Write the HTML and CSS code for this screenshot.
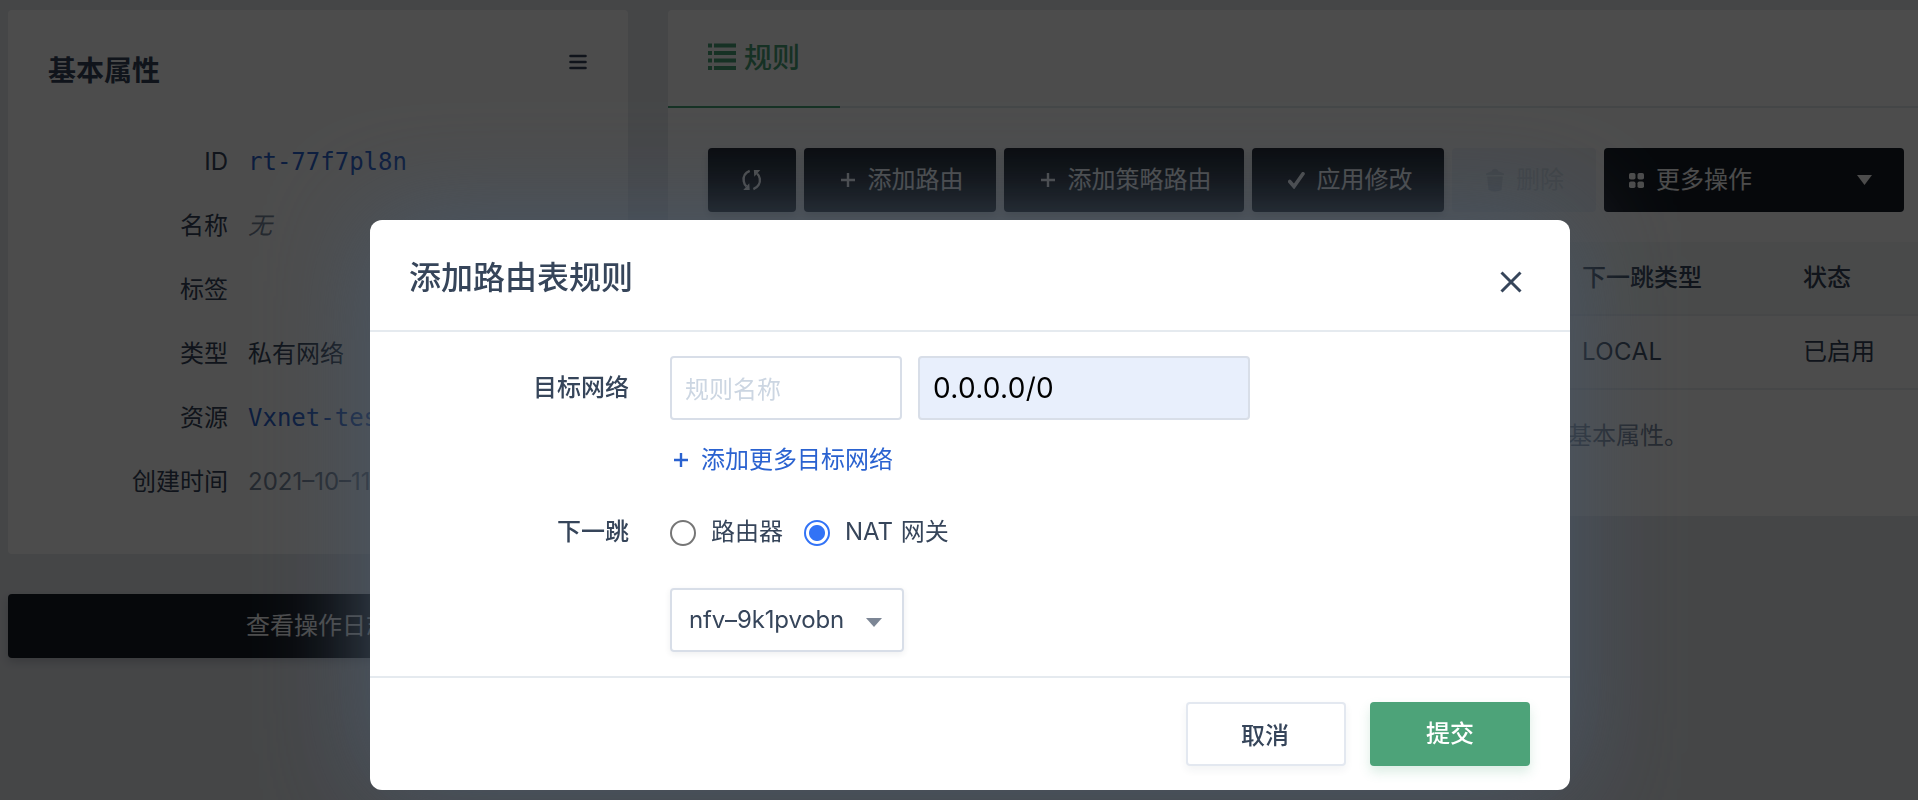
FILE: index.html
```html
<!DOCTYPE html>
<html lang="zh-CN">
<head>
<meta charset="utf-8">
<title>添加路由表规则</title>
<link rel="stylesheet" href="styles.css">
</head>
<body>
<div class="page">
  <aside class="sidebar">
    <section class="card attrs">
      <header class="attrs-head">
        <h2>基本属性</h2>
        <svg class="menu-icon" width="18" height="16" viewBox="0 0 18 16"><path d="M1.500 2h15M1.500 8h15M1.500 14h15"/></svg>
      </header>
      <dl class="attr-list">
        <dt>ID</dt><dd class="link">rt-77f7pl8n</dd>
        <dt>名称</dt><dd class="empty">无</dd>
        <dt>标签</dt><dd></dd>
        <dt>类型</dt><dd>私有网络</dd>
        <dt>资源</dt><dd class="link">Vxnet-test</dd>
        <dt>创建时间</dt><dd class="time">2021–10–11</dd>
      </dl>
    </section>
    <button class="btn log-btn">查看操作日志</button>
  </aside>

  <main class="card rules">
    <nav class="tabs">
      <a class="tab">
        <svg width="28" height="28" viewBox="0 0 28 28" fill="currentColor"><path d="M0 .5h4v4H0zM6 .5h22v4H6zM0 8h4v4H0zM6 8h22v4H6zM0 15.500h4v4H0zM6 15.500h22v4H6zM0 23h4v4H0zM6 23h22v4H6z"/></svg>
        <span>规则</span>
      </a>
    </nav>
    <div class="toolbar">
      <button class="btn w-refresh">
        <svg width="22" height="22" viewBox="0 0 22 24"><path d="M8.500 2C3.500 4 1.200 8.500 2 13.500c.4 2.500 1.500 4.300 3 5.500M12.500 22C17.500 20 20.300 15.500 19.500 10.500c-.4-2.500-1.500-4.300-3-5.500" fill="none" stroke="currentColor" stroke-width="2.600"/><path d="M13 1.200h7L13.500 8.500zM8.500 22.800h-7L8 15.500z" fill="currentColor"/></svg>
      </button>
      <button class="btn w-4"><svg class="plus" width="14" height="14" viewBox="0 0 14 14"><path d="M7 0v14M0 7h14"/></svg>添加路由</button>
      <button class="btn w-6"><svg class="plus" width="14" height="14" viewBox="0 0 14 14"><path d="M7 0v14M0 7h14"/></svg>添加策略路由</button>
      <button class="btn w-4"><svg class="check" width="17" height="17" viewBox="0 0 17 17"><path d="M1.700 9.500 6 14.500 15 1.800"/></svg>应用修改</button>
      <button class="btn disabled w-2"><svg class="trash" width="18" height="24" viewBox="0 0 18 24" fill="currentColor"><path d="M0 7V5.500L6 3c0-3 6-3 6 0l6 2.500V7zM1.200 8.500h15.600L15.500 22q-6.500 3-13 0z"/></svg>删除</button>
      <button class="btn w-more"><svg class="grid-icon" width="15" height="15" viewBox="0 0 15 15" fill="currentColor"><rect width="6.500" height="6.500" rx="1.800"/><rect x="8.500" width="6.500" height="6.500" rx="1.800"/><rect y="8.500" width="6.500" height="6.500" rx="1.800"/><rect x="8.500" y="8.500" width="6.500" height="6.500" rx="1.800"/></svg>更多操作<svg class="caret" width="15" height="10" viewBox="0 0 15 10" fill="currentColor"><path d="M0 0h15L7.500 10z"/></svg></button>
    </div>
    <div class="table">
      <div class="row head"><span>下一跳类型</span><span>状态</span></div>
      <div class="row"><span class="local">LOCAL</span><span>已启用</span></div>
    </div>
    <p class="note">基本属性。</p>
  </main>
</div>

<div class="overlay">
  <form class="modal">
    <header class="modal-head">
      <h1>添加路由表规则</h1>
      <svg class="close" width="22" height="22" viewBox="0 0 22 22"><path d="M1.500 1.500l19 19M20.500 1.500l-19 19"/></svg>
    </header>
    <div class="modal-body">
      <label class="label">目标网络</label>
      <div class="control">
        <div class="inputs">
          <div class="field name-field">规则名称</div>
          <div class="field cidr-field">0.0.0.0/0</div>
        </div>
        <a class="add-more"><svg class="plus" width="14" height="14" viewBox="0 0 14 14"><path d="M7 0v14M0 7h14"/></svg>添加更多目标网络</a>
      </div>
      <label class="label hop-label">下一跳</label>
      <div class="control hop">
        <div class="radios">
          <span class="radio"></span><span class="radio-text">路由器</span>
          <span class="radio on"></span><span class="radio-text nat">NAT 网关</span>
        </div>
        <div class="select"><span class="value">nfv–9k1pvobn</span><svg width="16" height="9" viewBox="0 0 16 9"><path d="M0 0h16L8 9z" fill="#7c8695"/></svg></div>
      </div>
    </div>
    <footer class="modal-foot">
      <button type="button" class="action cancel">取消</button>
      <button type="button" class="action submit">提交</button>
    </footer>
  </form>
</div>
</body>
</html>
```
FILE: styles.css
```css
* { box-sizing: border-box; }
html, body { margin: 0; height: 100%; overflow: hidden; }
body {
  background: #e7e9ee;
  color: #36455a;
  font: 24px/36px Inter, "Noto Sans CJK SC", sans-serif;
  font-weight: 370;
}
h1, h2, p, dl, dd { margin: 0; }
button { font: inherit; border: 0; padding: 0; }

.page { display: flex; gap: 40px; padding: 10px 0 0 8px; width: 1958px; }
.card { background: #fff; border-radius: 4px; }
.sidebar { width: 620px; display: flex; flex-direction: column; gap: 40px; }

.attrs { height: 544px; padding: 40px; }
.attrs-head { display: flex; justify-content: space-between; height: 81px; }
.attrs-head h2 { font-size: 28px; line-height: 42px; font-weight: 600; }
.menu-icon { margin: 4px 1px 0 0; stroke: #36455a; stroke-width: 2.6; stroke-linecap: round; }
.attr-list { display: grid; grid-template-columns: 180px 1fr; column-gap: 20px; grid-auto-rows: 64px; line-height: 64px; margin-top: -1px; }
.attr-list dt { text-align: right; }
.link { color: #2a62d0; font-family: "DejaVu Sans Mono", monospace; }
.empty { font-style: italic; color: #79879c; }
.time { color: #79879c; }

.btn {
  display: flex; align-items: center; justify-content: center;
  height: 64px; border-radius: 4px;
  background: #161c26; color: #fff;
  box-shadow: 0 4px 8px rgba(36, 46, 66, .2);
  white-space: nowrap;
}
.log-btn { width: 620px; }

.rules { width: 1290px; height: 506px; }
.tabs { height: 98px; border-bottom: 2px solid #e3e9ef; }
.tab {
  display: flex; align-items: flex-start; gap: 8px;
  width: 172px; height: 98px; padding: 30px 0 0 40px;
  border-bottom: 2px solid #4ca379; color: #4ca379;
  font-size: 28px; line-height: 37px; font-weight: 500;
}
.tab svg { margin-top: 3px; }
.toolbar { display: flex; gap: 8px; padding: 40px 0 0 40px; }
.w-refresh { width: 88px; }
.w-4 { width: 192px; padding-left: 4px; }
.w-6 { width: 240px; padding-left: 4px; }
.w-2 { width: 144px; }
.plus { fill: none; stroke: currentColor; stroke-width: 2.4; margin-right: 13px; }
.check { fill: none; stroke: currentColor; stroke-width: 3.6; stroke-linecap: round; margin-right: 12px; }
.trash { margin-right: 12px; }
.disabled { background: #eff4f9; color: #d3dce6; box-shadow: none; padding-left: 2px; }
.w-more { width: 300px; justify-content: flex-start; padding: 0 32px 0 25px; box-shadow: none; }
.grid-icon { margin-right: 12px; }
.caret { margin-left: auto; }

.table { margin: 30px 0 0 40px; width: 1250px; }
.row { display: grid; grid-template-columns: 221px 1fr; height: 74px; line-height: 72px; padding-left: 874px; border-bottom: 2px solid #e9edf2; }
.head { background: #f5f9f8; font-weight: 500; }
.local { letter-spacing: .4px; }
.note { padding: 28px 0 0 900px; color: #79879c; }

.overlay { position: fixed; inset: 0; background: rgba(0, 0, 0, .7); padding: 220px 0 0 370px; }
.modal { width: 1200px; height: 570px; background: #fff; border-radius: 12px; box-shadow: 0 0 106px #4a5868; display: flex; flex-direction: column; }
.modal-head { display: flex; justify-content: space-between; height: 112px; padding: 38px 48px 0 39px; border-bottom: 2px solid #e5eaef; }
.modal-head h1 { font-size: 32px; line-height: 40px; font-weight: 500; }
.close { margin-top: 13px; fill: none; stroke: #36455a; stroke-width: 3; }
.modal-body { display: grid; grid-template-columns: 260px 1fr; column-gap: 40px; grid-template-rows: 150px 1fr; padding-top: 24px; flex: 1; }
.label { text-align: right; font-weight: 500; line-height: 64px; padding-right: 1px; }
.inputs { display: flex; gap: 16px; }
.field { height: 64px; border: 2px solid #d8dee8; border-radius: 4px; line-height: 60px; }
.name-field { width: 232px; padding: 2px 0 0 13px; color: #ccd6e2; }
.cidr-field { width: 332px; padding-left: 13px; background: #e8effc; color: #000; font-size: 28px; letter-spacing: .3px; }
.add-more { display: flex; align-items: center; height: 36px; margin-top: 22px; padding-left: 4px; color: #2a62d0; }
.hop-label { line-height: 52px; }
.radios { display: flex; align-items: center; height: 54px; }
.radio { width: 26px; height: 26px; border: 2px solid #767676; border-radius: 50%; }
.radio.on { border-color: #3273f6; background: radial-gradient(circle, #3273f6 7.500px, #fff 8.500px); }
.radio-text { margin: 0 21px 0 15px; height: 38px; }
.nat { word-spacing: 1px; }
.select { display: flex; align-items: center; justify-content: space-between; width: 234px; height: 64px; margin-top: 28px; padding: 0 20px 0 17px; border: 2px solid #d8dee8; border-radius: 4px; box-shadow: 0 2px 6px rgba(36, 46, 66, .08); }
.select svg { margin-top: 4px; }
.value { letter-spacing: -.15px; white-space: nowrap; }
.modal-foot { display: flex; justify-content: flex-end; gap: 24px; height: 114px; padding: 24px 40px 0 0; border-top: 2px solid #e5eaef; }
.action { width: 160px; height: 64px; border-radius: 4px; font-weight: 500; }
.cancel { background: #fff; color: #36455a; border: 2px solid #e3e8f0; box-shadow: 0 4px 8px rgba(36, 46, 66, .06); padding: 3px 2px 0 0; }
.submit { background: #4da379; color: #fff; box-shadow: 0 6px 12px rgba(77, 163, 121, .2); }
```
